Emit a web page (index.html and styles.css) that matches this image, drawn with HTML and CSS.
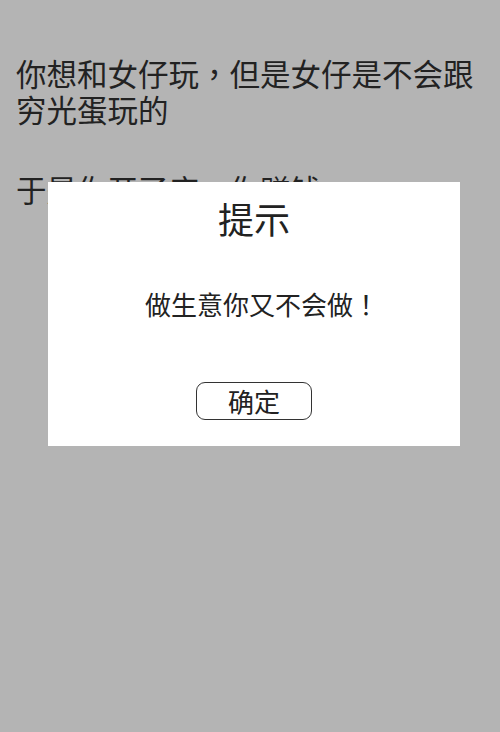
FILE: index.html
```html
<!DOCTYPE html>
<html lang="zh-TW">
<head>
<meta charset="utf-8">
<title>提示</title>
<link rel="stylesheet" href="styles.css">
</head>
<body>
<main class="story">
  <p class="para">你想和女仔玩，但是女仔是不会跟穷光蛋玩的</p>
  <p class="para">于是你开了店，你赚钱</p>
</main>
<div class="dialog" role="dialog">
  <h2 class="dialog-title">提示</h2>
  <p class="dialog-msg">做生意你又不会做！</p>
  <button class="dialog-btn" type="button">确定</button>
</div>
</body>
</html>
```
FILE: styles.css
```css
html, body {
  margin: 0;
  padding: 0;
  height: 100%;
}
body {
  background: #b4b4b4;
  color: #222;
  font-family: "Noto Sans CJK TC", "Noto Sans CJK SC", sans-serif;
  text-spacing-trim: space-all;
  font-kerning: none;
}
.story {
  padding: 55px 16px 0;
  display: flex;
  flex-direction: column;
  gap: 44px;
}
.para {
  margin: 0;
  font-size: 30.5px;
  line-height: 36px;
}
.dialog {
  position: fixed;
  left: 48px;
  top: 182px;
  width: 412px;
  height: 264px;
  background: #fff;
  display: flex;
  flex-direction: column;
  align-items: center;
  box-sizing: border-box;
  padding-top: 14px;
}
.dialog-title {
  margin: 0;
  font-size: 36px;
  font-weight: normal;
  line-height: 44px;
  color: #222;
}
.dialog-msg {
  margin: 49px 0 0;
  padding-left: 16px;
  font-size: 26px;
  line-height: 30px;
  color: #222;
}
.dialog-btn {
  margin-top: 63px;
  width: 116px;
  height: 38px;
  border: 1.5px solid #333;
  border-radius: 9px;
  background: #fff;
  font-family: inherit;
  font-size: 26px;
  line-height: 1;
  color: #222;
  padding: 0;
  display: flex;
  align-items: center;
  justify-content: center;
}
```
